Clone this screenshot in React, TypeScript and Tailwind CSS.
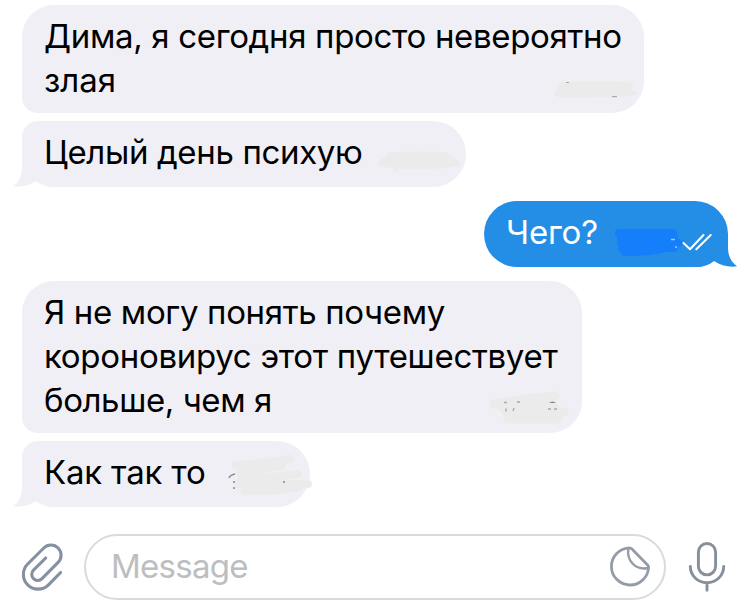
import React from 'react';
import clsx from 'clsx';

interface Line {
  text: string;
  className?: string;
}

interface BubbleProps {
  lines: Line[];
  className: string;
  outgoing?: boolean;
  tail?: boolean;
  children?: React.ReactNode;
}

const Bubble: React.FC<BubbleProps> = ({ lines, className, outgoing, tail, children }) => (
  <div
    className={clsx(
      'relative px-[22px] pt-[9px] text-[33px] leading-[44px] whitespace-nowrap',
      outgoing ? 'self-end mr-[22px] bg-[#248de5] text-white' : 'ml-[22px] bg-[#f0eff5] text-black',
      className
    )}
  >
    {tail && (
      <svg
        className={clsx('absolute bottom-0 h-[66px] w-8 overflow-visible', outgoing ? 'right-0 -scale-x-100' : 'left-0')}
        viewBox="0 0 32 66"
        fill={outgoing ? '#248de5' : '#f0eff5'}
      >
        <path d="M0 32V46C0 55-3 61-9 65.3C-1 66.5 7 64.5 14 60C19 64 25 66 32 66V32Z" />
      </svg>
    )}
    {lines.map(line => (
      <p key={line.text} className="relative">
        <span className={line.className}>{line.text}</span>
      </p>
    ))}
    <svg className="absolute left-0 top-0 h-full w-full overflow-visible" fill="none">
      {children}
    </svg>
  </div>
);

const PaperclipIcon = () => (
  <svg className="h-[52px] w-[44px]" viewBox="20 1 44 52" fill="none" stroke="#8590a0" strokeWidth="3.1" strokeLinecap="round" strokeLinejoin="round">
    <path d="M60.6 32.5L48.5 44.8A14.7 14.7 0 0 1 27.7 24L43.8 8A10.1 10.1 0 0 1 58.1 22.3L42 38.7A6 6 0 0 1 33.5 30.2L45.7 18" />
  </svg>
);

const StickerIcon = () => (
  <svg className="h-[42px] w-[42px]" viewBox="609 546 42 42" fill="none" stroke="#949ca8" strokeWidth="2.8" strokeLinejoin="round">
    <path d="M629.5 547.8A18.6 18.6 0 1 0 648.6 567.5Q648.7 566.2 647.8 565.3L632 549Q630.8 547.8 629.5 547.8Z" />
    <path d="M628.4 548.2C626.3 560.5 635.5 570.8 648.3 568" strokeWidth="2.4" />
  </svg>
);

const MicIcon = () => (
  <svg className="h-[52px] w-[40px]" viewBox="687 541 40 52" fill="none" stroke="#868f9c" strokeWidth="2.9" strokeLinecap="round">
    <rect x="698.4" y="543.5" width="17.2" height="31.4" rx="8.6" />
    <path d="M690.3 566.5A16.7 16.2 0 0 0 723.7 566.5M707 583V590.3" />
  </svg>
);

export default function App() {
  return (
    <div className="flex h-[612px] w-[750px] flex-col overflow-hidden bg-white pt-[5px] font-['Inter','Liberation_Sans',sans-serif]">
      <Bubble
        className="h-[108px] w-[622px] rounded-[32px] rounded-bl-[16px]"
        lines={[{ text: 'Дима, я сегодня просто невероятно', className: 'tracking-[-0.33px]' }, { text: 'злая' }]}
      >
        <path d="M540 77Q585 75 601 76.500Q614 77 611 82Q607 85 611 86Q617 87 613 90Q607 92 595 91.500Q572 93 540 92.500Q529 92 534 86Q536 78 540 77Z" fill="#ebebeb" />
        <path d="M544 77.500h3M590 91.700h5" stroke="#aaa" strokeWidth="1.200" />
      </Bubble>

      <Bubble
        className="mt-2 h-[66px] w-[444px] rounded-[33px] rounded-tl-[16px]"
        tail
        lines={[{ text: 'Целый день психую', className: 'tracking-[-0.35px]' }]}
      >
        <path d="M366 31.500Q395 30 424 31Q430 36 438 41Q441 44 434 45Q420 49 376 48Q377 53 373 51Q370 46 363 46Q352 43 359 38Q366 36 366 31.500Z" fill="#ebebeb" />
      </Bubble>

      <Bubble
        className="mt-[14px] h-[66px] w-[244px] rounded-[33px]"
        outgoing
        tail
        lines={[{ text: 'Чего?', className: 'tracking-[-0.2px]' }]}
      >
        <path d="M135 32H189M137 37H190M137 42H194M138 47H190M141 51Q165 51 183 47" stroke="#157efb" strokeWidth="8" strokeLinecap="round" />
        <path d="M187 38.500h4M191 46h2" stroke="#9bcaff" strokeWidth="1.300" />
        <path d="M199.500 42L206 48.300L219.500 34M212.300 48.300L226.700 34" stroke="#fff" strokeWidth="2" strokeLinecap="round" strokeLinejoin="round" />
      </Bubble>

      <Bubble
        className="mt-[14px] h-[152px] w-[560px] rounded-[32px] rounded-bl-[16px]"
        lines={[
          { text: 'Я не могу понять почему', className: 'tracking-[-0.34px]' },
          { text: 'короновирус этот путешествует', className: 'tracking-[-0.3px]' },
          { text: 'больше, чем я', className: 'tracking-[-0.4px]' },
        ]}
      >
        <path d="M472 123Q495 119 533 115M478 125H532M484 131H542M486 138H536" stroke="#ebebeb" strokeWidth="9" strokeLinecap="round" />
        <path d="M484 127.500v3M491 130l1-3M482 121.500h3M495 121h3M526 128h3M532 128h3" stroke="#aaa" strokeWidth="1.400" />
        <path d="M527 122Q530.500 119 534 122Z" fill="#888" />
      </Bubble>

      <Bubble
        className="mt-2 h-[66px] w-[288px] rounded-[33px] rounded-tl-[16px]"
        tail
        lines={[{ text: 'Как так то', className: 'tracking-[-0.2px]' }]}
      >
        <path d="M214 24Q240 23 268 18M218 32L260 25M219 37Q240 38 276 33M216 43H286M223 50Q250 51 277 46" stroke="#ebebeb" strokeWidth="8" strokeLinecap="round" />
        <path d="M207 37Q208 34 213 33M211 41h2M211 47h2M261 41h2" stroke="#888" strokeWidth="1.400" />
      </Bubble>

      <div className="mt-[27px] flex h-[66px] items-center pl-5">
        <PaperclipIcon />
        <div className="ml-5 flex h-[66px] w-[582px] items-center justify-between rounded-full border-2 border-[#d7dbe0] pl-[25px] pr-[13px]">
          <span className="relative -top-px text-[33px] leading-[44px] tracking-[-0.75px] text-[#bdbec0]">Message</span>
          <StickerIcon />
        </div>
        <div className="ml-[21px]">
          <MicIcon />
        </div>
      </div>
    </div>
  );
}
